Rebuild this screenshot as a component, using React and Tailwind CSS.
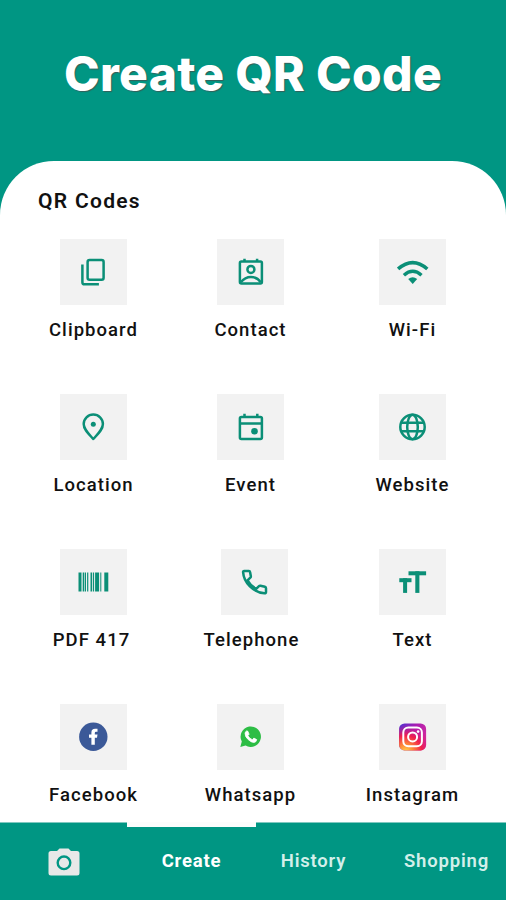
import clsx from 'clsx';

const Icon = ({ children }) => (
  <svg viewBox="0.5 0 32 32" className="w-8 h-8" fill="none" stroke="#0b8f77" strokeWidth="2.5" strokeLinejoin="round">
    {children}
  </svg>
);

const ClipboardIcon = () => (
  <Icon>
    <rect x="10.1" y="4.1" width="16" height="19.6" rx="2" />
    <path d="M4.9 8.5V26.2Q4.9 28.3 7 28.3H21.4" />
  </Icon>
);

const ContactIcon = () => (
  <Icon>
    <rect x="5.4" y="5.6" width="22" height="22" rx="1.5" />
    <path d="M10 2.8V6M22.6 2.8V6" />
    <circle cx="16.4" cy="13.4" r="3.5" />
    <path d="M6.3 26.2Q10.5 21 16.4 21T26.3 26.2" />
  </Icon>
);

const WifiIcon = () => (
  <Icon>
    <path d="M1.6 13Q16.2 .2 30.8 13" strokeWidth="3.6" />
    <path d="M7.4 19.2Q16.2 11.4 25 19.2" strokeWidth="3.4" />
    <path d="M11.7 23Q16.2 19.4 20.7 23L16.2 28Z" fill="#0b8f77" stroke="none" />
  </Icon>
);

const LocationIcon = () => (
  <Icon>
    <path d="M15.8 28C10.8 22.5 6.2 18.3 6.2 13A9.6 9.4 0 0 1 25.4 13C25.4 18.3 20.8 22.5 15.8 28Z" />
    <circle cx="15.8" cy="13.2" r="2.5" fill="#0b8f77" stroke="none" />
  </Icon>
);

const EventIcon = () => (
  <Icon>
    <rect x="5.4" y="5.9" width="22" height="22" rx="1.5" />
    <path d="M5.4 12.4H27.4M10 2.8V6M22.8 2.8V6" />
    <circle cx="20" cy="20.3" r="3.3" fill="#0b8f77" stroke="none" />
  </Icon>
);

const WebsiteIcon = () => (
  <Icon>
    <circle cx="16" cy="16" r="12.2" />
    <ellipse cx="16" cy="16" rx="5.3" ry="12.2" />
    <path d="M5 11.7H27M5 20.3H27" />
  </Icon>
);

const BarcodeIcon = () => (
  <Icon>
    <g fill="#0b8f77" stroke="none">
      <rect x="1" y="6.5" width="3" height="19" />
      <rect x="5.2" y="6.5" width="1.5" height="19" />
      <rect x="7.3" y="6.5" width="1.2" height="19" />
      <rect x="9.6" y="6.5" width="1.2" height="19" />
      <rect x="13" y="6.5" width="1.6" height="19" />
      <rect x="15.4" y="6.5" width="1.2" height="19" />
      <rect x="17.6" y="6.5" width="4" height="19" />
      <rect x="22.8" y="6.5" width="1" height="19" />
      <rect x="26.8" y="6.5" width="4" height="19" />
    </g>
  </Icon>
);

const PhoneIcon = () => (
  <Icon>
    <path d="M5.6 5H10.4Q11.4 5 11.6 6.2L12.3 10Q12.5 11 11.8 11.7L9 14.3Q12 19.8 17.7 22.8L20.5 20.1Q21.1 19.5 22 19.7L26.4 20.7Q27.5 21 27.5 22.2V26Q27.5 27.4 26 27.3Q17.7 26.6 11.4 20.4T4.6 6.2Q4.5 5 5.6 5Z" />
  </Icon>
);

const TextIcon = () => (
  <Icon>
    <g fill="#0b8f77" stroke="none">
      <rect x="12" y="5.3" width="17.6" height="4" />
      <rect x="18.8" y="5.3" width="4.1" height="21.6" />
      <rect x="2.8" y="12.2" width="12.2" height="4" />
      <rect x="6.6" y="12.2" width="4" height="14.7" />
    </g>
  </Icon>
);

const FacebookIcon = () => (
  <Icon>
    <circle cx="15.8" cy="15.8" r="14.2" fill="#3b5998" stroke="none" />
    <path d="M13.9 23.8V16.8H11.5V13.6H13.9V11.5Q13.9 7.8 17.6 7.8H20V10.8H18.5Q17.3 10.8 17.3 12V13.6H20L19.5 16.8H17.3V23.8Z" fill="#fff" stroke="none" />
  </Icon>
);

const WhatsappIcon = () => (
  <Icon>
    <path d="M5.8 26.1L7.3 20.6A10.2 10.2 0 1 1 11.1 24.5Z" fill="#2dbd45" stroke="none" />
    <path d="M12.2 9.9L13.2 10.1L14.6 13.2L13.4 14.7Q14.9 17.6 17.8 18.7L19.4 17.1L22.2 18.6Q22 21.3 19.3 21.4Q16.6 21.5 13.4 18.3T10.6 12.3Q10.6 10.6 12.2 9.9Z" fill="#fff" stroke="#fff" strokeWidth=".8" />
  </Icon>
);

const InstagramIcon = () => (
  <Icon>
    <defs>
      <linearGradient id="insta-base" x1="0" y1="0" x2="1" y2="0.5">
        <stop offset="0" stopColor="#4934d2" />
        <stop offset=".5" stopColor="#a51cb4" />
        <stop offset="1" stopColor="#d22aa0" />
      </linearGradient>
      <radialGradient id="insta-glow" cx=".25" cy="1.05" r="1">
        <stop offset="0" stopColor="#ffd64e" />
        <stop offset=".25" stopColor="#ff9036" />
        <stop offset=".6" stopColor="#f0204c" />
        <stop offset="1" stopColor="#d01c8c" stopOpacity="0" />
      </radialGradient>
    </defs>
    <g stroke="none">
      <rect x="2.6" y="2.4" width="27" height="27" rx="5.5" fill="url(#insta-base)" />
      <rect x="2.6" y="2.4" width="27" height="27" rx="5.5" fill="url(#insta-glow)" />
    </g>
    <g stroke="#fff" strokeWidth="2">
      <rect x="6.8" y="6.6" width="18.6" height="18.6" rx="5" />
      <circle cx="16.1" cy="15.9" r="4.5" />
      <circle cx="21.6" cy="10.6" r="1.3" fill="#fff" stroke="none" />
    </g>
  </Icon>
);

const CameraIcon = () => (
  <svg viewBox="0 0 32 28" className="w-8 h-7">
    <path d="M3 3H9L11.5 .5H20.5L23 3H29Q31.5 3 31.5 5.5V25Q31.5 27.5 29 27.5H3Q.5 27.5 .5 25V5.5Q.5 3 3 3Z" fill="#e8e8e8" />
    <circle cx="16" cy="14.8" r="6.3" fill="none" stroke="#009683" strokeWidth="2.4" />
  </svg>
);

const ITEMS = [
  { name: 'Clipboard', icon: ClipboardIcon },
  { name: 'Contact', icon: ContactIcon },
  { name: 'Wi-Fi', icon: WifiIcon },
  { name: 'Location', icon: LocationIcon },
  { name: 'Event', icon: EventIcon },
  { name: 'Website', icon: WebsiteIcon },
  { name: 'PDF 417', icon: BarcodeIcon, labelClass: '-ml-1' },
  { name: 'Telephone', icon: PhoneIcon, tileClass: 'ml-2', labelClass: 'ml-0.5' },
  { name: 'Text', icon: TextIcon },
  { name: 'Facebook', icon: FacebookIcon },
  { name: 'Whatsapp', icon: WhatsappIcon },
  { name: 'Instagram', icon: InstagramIcon },
];

const App = () => {
  return (
    <div className="w-[506px] h-[900px] flex flex-col overflow-hidden bg-[#009683] font-['Roboto',sans-serif]">
      <header className="h-[161px] shrink-0 pt-[42px] text-center">
        <h1 className="font-['Inter',sans-serif] font-extrabold text-[48px] leading-[64px] tracking-[0.3px] whitespace-nowrap text-white [text-shadow:1px_1px_1px_#35605a]">
          Create QR Code
        </h1>
      </header>

      <main className="h-[661px] shrink-0 rounded-t-[54px] bg-white">
        <h2 className="h-[78px] pt-[27px] pl-[38px] text-[21px] leading-[26px] font-semibold tracking-[1.3px] text-[#111]">
          QR Codes
        </h2>
        <div className="grid grid-cols-[157px_157px_167px] auto-rows-[155px] pl-[15px]">
          {ITEMS.map(({ name, icon: ItemIcon, tileClass, labelClass }) => (
            <div key={name} className="flex flex-col items-center">
              <div className={clsx('w-[67px] h-[66px] flex items-center justify-center bg-[#f2f2f2]', tileClass)}>
                <ItemIcon />
              </div>
              <span className={clsx('mt-[13px] text-[18.5px] leading-6 font-medium tracking-[1.05px] whitespace-nowrap text-[#111]', labelClass)}>
                {name}
              </span>
            </div>
          ))}
        </div>
      </main>

      {/* Bottom tabs */}
      <nav className="h-[78px] shrink-0 grid grid-cols-[127px_129px_115px_151px] border-t border-[#80c8c0] text-[18.5px] font-semibold tracking-[0.8px] text-[#d3efea]">
        <div className="flex justify-center pt-[25px]">
          <CameraIcon />
        </div>
        <div className="-mt-px flex flex-col items-center text-white font-bold">
          <div className="w-full h-[5px] bg-[#fcfcfc]" />
          <span className="mt-[22px] leading-6">Create</span>
        </div>
        <span className="pt-[26px] leading-6 text-center">History</span>
        <span className="pt-[26px] leading-6 text-center">Shopping</span>
      </nav>
    </div>
  );
};

export default App;
